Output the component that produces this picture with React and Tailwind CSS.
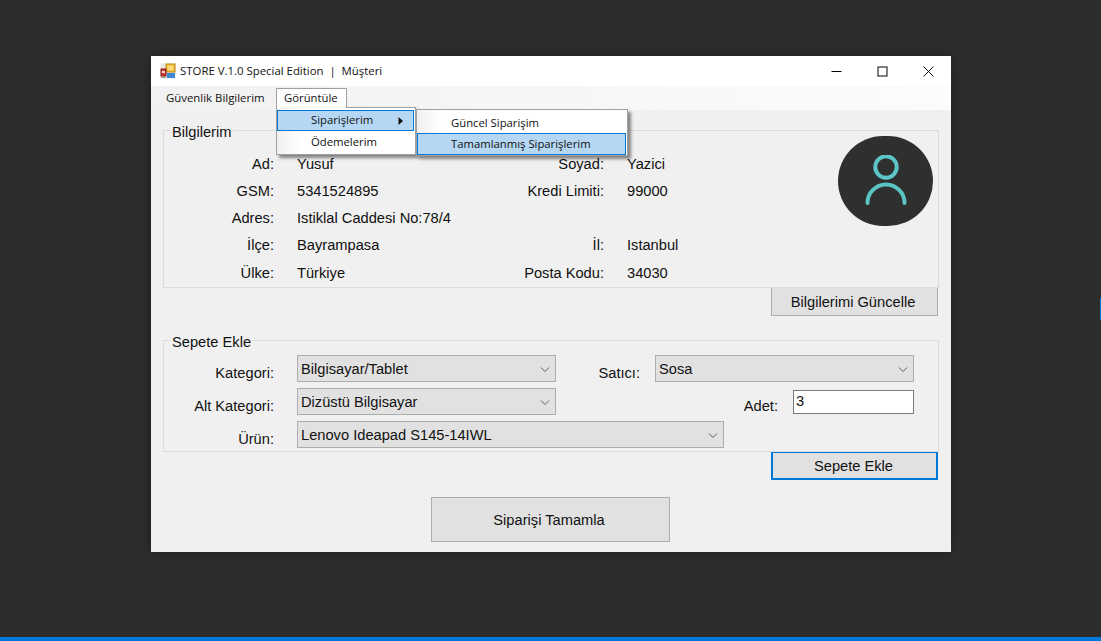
import React from 'react';

const sans = { fontFamily: '"Liberation Sans", Arial, sans-serif' };
const menuFont = { fontFamily: '"Open Sans", sans-serif' };

function AppIcon() {
  return (
    <svg width="16" height="16" viewBox="0 0 16 16" className="shrink-0">
      <rect x="0.5" y="0.5" width="15" height="15" fill="#e8e8e8" />
      <rect x="6" y="1" width="9" height="8" fill="#f2b92f" stroke="#c08a1a" />
      <rect x="7.5" y="2.5" width="6" height="5" fill="#f8dc7a" />
      <rect x="1" y="6" width="5" height="7" fill="#c83a2c" stroke="#8a2018" />
      <rect x="2" y="8" width="3" height="2" fill="#f4e0dc" />
      <rect x="7" y="10" width="8" height="5" fill="#3f86d0" />
      <rect x="1" y="14" width="5" height="1" fill="#9a9a9a" />
    </svg>
  );
}

function WindowButtons() {
  return (
    <div className="flex items-center h-full">
      <div className="w-[46px] flex justify-center">
        <svg width="11" height="11" viewBox="0 0 11 11"><path d="M0.5 5.5H10.5" stroke="#000" fill="none" /></svg>
      </div>
      <div className="w-[46px] flex justify-center">
        <svg width="11" height="11" viewBox="0 0 11 11"><rect x="1" y="1" width="9" height="9" stroke="#000" fill="none" /></svg>
      </div>
      <div className="w-[46px] flex justify-center">
        <svg width="11" height="11" viewBox="0 0 11 11"><path d="M0.5 0.5L10.5 10.5M10.5 0.5L0.5 10.5" stroke="#111" fill="none" /></svg>
      </div>
    </div>
  );
}

function GroupBox({ title, className, children }) {
  return (
    <div className={`relative border border-[#dcdcdc] ${className}`}>
      <span className="absolute left-[6px] top-[-7px] bg-[#f0f0f0] px-[2px] text-[14.67px] leading-[16px] text-[#111]">{title}</span>
      {children}
    </div>
  );
}

function Row({ label, value, label2, value2, low }) {
  const line = low ? 'h-[27px] leading-[29px]' : 'h-[27px] leading-[27px]';
  return (
    <>
      <div className={`${line} text-right`}>{label}</div>
      <div className={`${line} pl-[23px]`}>{value}</div>
      <div className={`${line} text-right`}>{label2}</div>
      <div className={`${line} pl-[23px]`}>{value2}</div>
    </>
  );
}

function FieldLabel({ width, children }) {
  return <div className={`${width} shrink-0 text-right pt-[10px] leading-[17px]`}>{children}</div>;
}

function Combo({ width, children }) {
  return (
    <div className={`${width} h-[26px} shrink-0 flex items-center justify-between bg-[#e1e1e1] border border-[#adadad] pl-[3px] pr-[3px]`}>
      <span className="leading-[20px]">{children}</span>
      <svg width="12" height="12" viewBox="0 0 12 12" className="mr-[1px]">
        <path d="M2 4.5L6 8.5L10 4.5" stroke="#606060" fill="none" />
      </svg>
    </div>
  );
}

function ActionButton({ className, children }) {
  return (
    <div className={`flex items-center justify-center bg-[#e1e1e1] ${className}`}>{children}</div>
  );
}

function Menus() {
  return (
    <>
      {/* open "Görüntüle" tab */}
      <div className="absolute left-[125px] top-[32px] w-[71px] h-[20px] z-20 bg-white border border-b-0 border-[#a0a0a0] pl-[7px] text-[11.3px] leading-[18px] text-[#111]" style={menuFont}>
        Görüntüle
      </div>

      {/* first level */}
      <div className="absolute left-[125px] top-[51px] w-[140px] h-[48px] z-10 bg-white border border-[#a0a0a0] pt-[2px] pr-[1px] shadow-[3px_3px_3px_rgba(0,0,0,0.45)] text-[11.3px] text-[#111]" style={menuFont}>
        <div className="absolute left-0 top-0 bottom-0 w-[24px] bg-gradient-to-r from-[#f0f0f0] to-white" />
        <div className="relative h-[21px] bg-[#b5d7f3] border border-[#0078d7] pl-[33px] flex items-center justify-between pr-[9px]">
          <span>Siparişlerim</span>
          <svg width="6" height="8" viewBox="0 0 6 8"><path d="M0.5 0L5 4L0.5 8Z" fill="#111" /></svg>
        </div>
        <div className="relative h-[22px] pl-[34px] leading-[22px]">Ödemelerim</div>
      </div>

      {/* second level */}
      <div className="absolute left-[265px] top-[53px] w-[212px] h-[47px] z-30 bg-white border border-[#a0a0a0] p-[1px] pl-0 shadow-[3px_3px_3px_rgba(0,0,0,0.45)] text-[11.3px] text-[#111]" style={menuFont}>
        <div className="absolute left-0 top-0 bottom-0 w-[24px] bg-gradient-to-r from-[#f0f0f0] to-white" />
        <div className="relative h-[22px] pl-[34px] leading-[23px]">Güncel Siparişim</div>
        <div className="relative h-[22px] bg-[#b5d7f3] border border-[#0078d7] pl-[33px] leading-[20px]">Tamamlanmış Siparişlerim</div>
      </div>
    </>
  );
}

export default function App() {
  return (
    <div className="relative h-screen w-full overflow-hidden flex flex-col bg-[#2d2d2d]">
      <div className="flex-1 pt-[56px] pl-[151px]">
        <div className="relative w-[800px] h-[496px] flex flex-col bg-[#f0f0f0] shadow-[0_0_12px_rgba(0,0,0,0.35)] text-[14.67px] text-[#111]" style={sans}>
          {/* Title bar */}
          <div className="h-[30px] shrink-0 flex items-center justify-between bg-white pl-[9px]">
            <div className="flex items-center gap-[4px] text-[11.4px] text-[#111]" style={menuFont}>
              <AppIcon />
              <span className="whitespace-pre">STORE V.1.0 Special Edition  |  Müşteri</span>
            </div>
            <WindowButtons />
          </div>

          {/* Menu bar */}
          <div className="h-[24px] shrink-0 flex items-center bg-gradient-to-r from-[#f1f1f1] to-[#fcfcfc] pl-[15px] text-[11.4px]" style={menuFont}>
            <span>Güvenlik Bilgilerim</span>
          </div>

          <Menus />

          {/* Content */}
          <div className="flex-1 flex flex-col pt-[20px] px-[12px]">
            <GroupBox title="Bilgilerim" className="h-[158px] flex justify-between items-start">
              <div className="grid grid-cols-[110px_240px_90px_auto] pt-[20px]">
                <Row label="Ad:" value="Yusuf" label2="Soyad:" value2="Yazici" />
                <Row label="GSM:" value="5341524895" label2="Kredi Limiti:" value2="99000" />
                <Row label="Adres:" value={<span className="whitespace-nowrap">Istiklal Caddesi No:78/4</span>} />
                <Row label="İlçe:" value="Bayrampasa" label2="İl:" value2="Istanbul" />
                <Row low label="Ülke:" value="Türkiye" label2="Posta Kodu:" value2="34030" />
              </div>
              <div className="w-[95px] h-[90px] mt-[5px] mr-[5px] rounded-full bg-[#2f2f2f] flex items-center justify-center">
                <svg width="44" height="52" viewBox="0 0 44 52" fill="none" stroke="#5bc5c5" strokeWidth="4" strokeLinecap="round">
                  <circle cx="22" cy="12" r="10.7" />
                  <path d="M3.5 48A18.5 18.5 0 0 1 40.5 48" />
                </svg>
              </div>
            </GroupBox>

            <div className="flex justify-end mr-[1px] mt-[-1px]">
              <ActionButton className="w-[167px] h-[29px] border border-[#adadad] pr-[3px]">Bilgilerimi Güncelle</ActionButton>
            </div>

            <GroupBox title="Sepete Ekle" className="h-[112px] mt-[24px] pt-[14px] flex flex-col gap-[6px]">
              <div className="flex">
                <FieldLabel width="w-[110px]">Kategori:</FieldLabel>
                <div className="w-[23px] shrink-0" />
                <Combo width="w-[259px]">Bilgisayar/Tablet</Combo>
                <FieldLabel width="w-[84px]">Satıcı:</FieldLabel>
                <div className="w-[15px] shrink-0" />
                <Combo width="w-[259px]">Sosa</Combo>
              </div>
              <div className="flex">
                <FieldLabel width="w-[110px]">Alt Kategori:</FieldLabel>
                <div className="w-[23px] shrink-0" />
                <Combo width="w-[259px]">Dizüstü Bilgisayar</Combo>
                <FieldLabel width="w-[222px]">Adet:</FieldLabel>
                <div className="w-[15px] shrink-0" />
                <div className="w-[121px] h-[24px] mt-[2px] bg-white border border-[#7a7a7a] pl-[2px] leading-[21px]">3</div>
              </div>
              <div className="flex">
                <FieldLabel width="w-[110px]">Ürün:</FieldLabel>
                <div className="w-[23px] shrink-0" />
                <Combo width="w-[427px]">Lenovo Ideapad S145-14IWL</Combo>
              </div>
            </GroupBox>

            <div className="flex justify-end mr-[1px] mt-[-1px]">
              <ActionButton className="w-[167px] h-[29px] border-2 border-[#0078d7] pr-[2px]">Sepete Ekle</ActionButton>
            </div>

            <div className="flex justify-center mt-[17px] pr-[1px]">
              <ActionButton className="w-[239px] h-[45px] border border-[#adadad] pr-[3px]">Siparişi Tamamla</ActionButton>
            </div>
          </div>
        </div>
      </div>

      {/* Taskbar edge */}
      <div className="h-[4px] shrink-0 bg-[#0078d7]" />
      <div className="absolute right-0 top-[298px] w-[1px] h-[22px] bg-[#0078d7]" />
    </div>
  );
}
